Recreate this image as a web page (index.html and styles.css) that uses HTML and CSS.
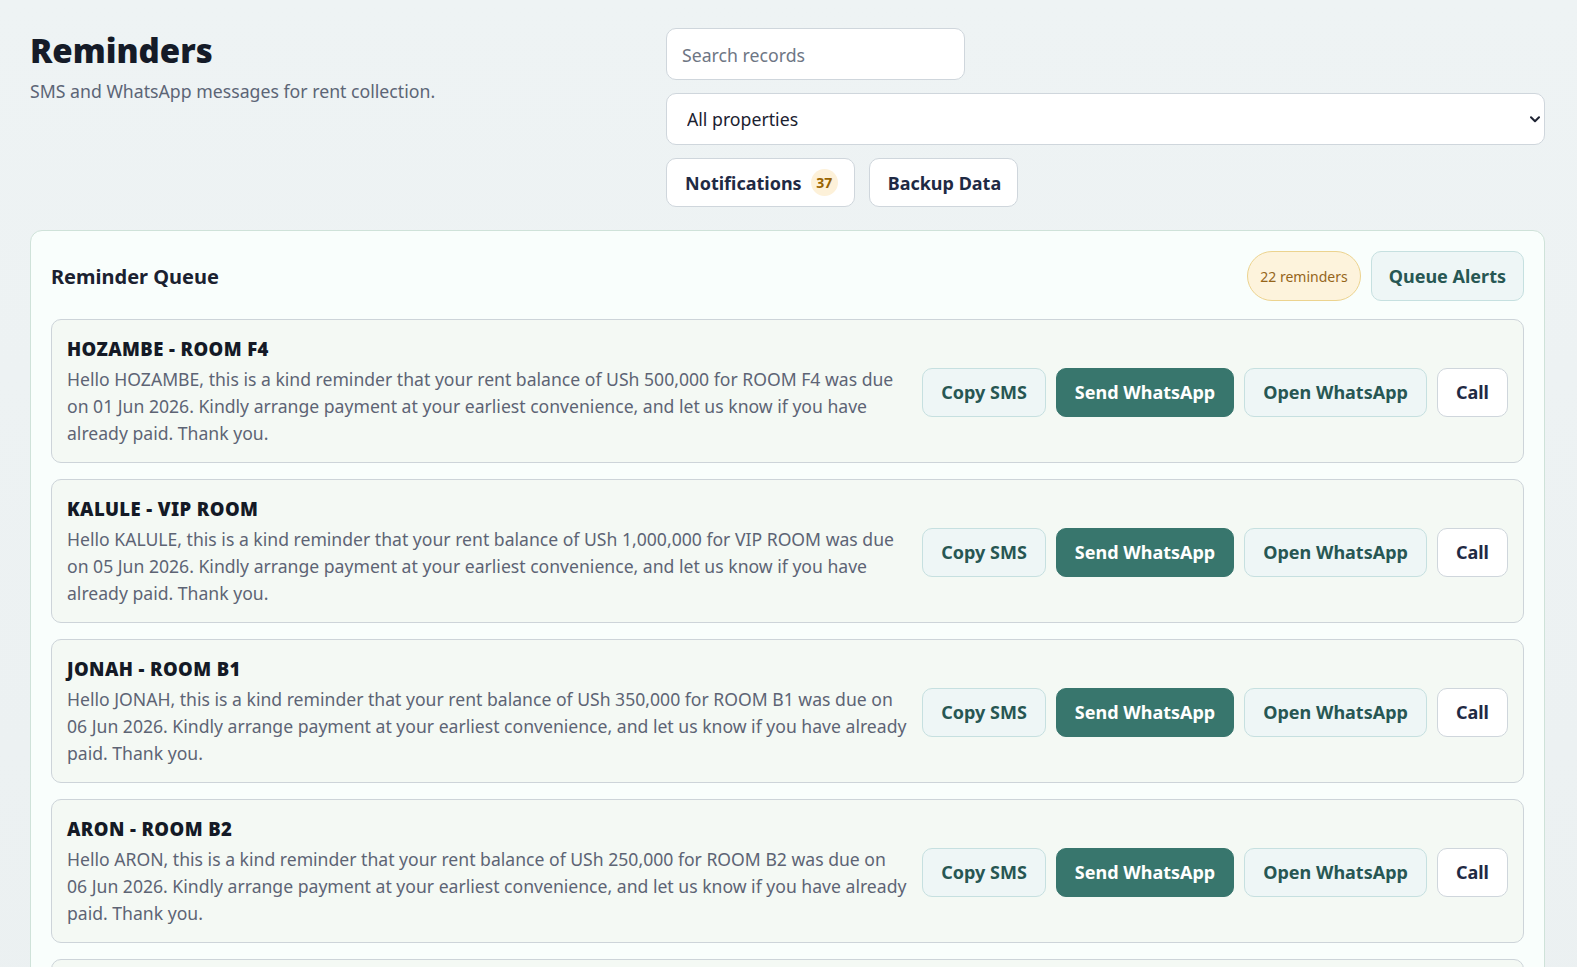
FILE: index.html
```html
<!DOCTYPE html>
<html lang="en">
<head>
<meta charset="UTF-8" />
<meta name="viewport" content="width=device-width, initial-scale=1" />
<title>Reminders</title>
<link rel="stylesheet" href="styles.css">
</head>
<body>

<header class="page-head">
  <div class="page-title">
    <h1>Reminders</h1>
    <p>SMS and WhatsApp messages for rent collection.</p>
  </div>
  <div class="page-tools">
    <input type="text" class="search" placeholder="Search records" />
    <div class="select-wrap">
      <select class="property-select">
        <option>All properties</option>
      </select>
      <svg class="chevron" width="10" height="7" viewBox="0 0 10 7"><path d="M1 1.2 5 5.2l4-4" fill="none" stroke="#1f2433" stroke-width="2" stroke-linecap="round" stroke-linejoin="round"/></svg>
    </div>
    <div class="tool-buttons">
      <button class="btn btn-plain">Notifications <span class="count">37</span></button>
      <button class="btn btn-plain">Backup Data</button>
    </div>
  </div>
</header>

<section class="queue">
  <div class="queue-head">
    <h2>Reminder Queue</h2>
    <div class="queue-actions">
      <span class="pill">22 reminders</span>
      <button class="btn btn-soft">Queue Alerts</button>
    </div>
  </div>

  <div class="reminder">
    <div class="reminder-body">
      <h3>HOZAMBE - ROOM F4</h3>
      <p>Hello HOZAMBE, this is a kind reminder that your rent balance of USh 500,000 for ROOM F4 was due on 01 Jun 2026. Kindly arrange payment at your earliest convenience, and let us know if you have already paid. Thank you.</p>
    </div>
    <div class="reminder-actions">
      <button class="btn btn-soft">Copy SMS</button>
      <button class="btn btn-primary">Send WhatsApp</button>
      <button class="btn btn-soft">Open WhatsApp</button>
      <button class="btn btn-plain">Call</button>
    </div>
  </div>

  <div class="reminder">
    <div class="reminder-body">
      <h3>KALULE - VIP ROOM</h3>
      <p>Hello KALULE, this is a kind reminder that your rent balance of USh 1,000,000 for VIP ROOM was due on 05 Jun 2026. Kindly arrange payment at your earliest convenience, and let us know if you have already paid. Thank you.</p>
    </div>
    <div class="reminder-actions">
      <button class="btn btn-soft">Copy SMS</button>
      <button class="btn btn-primary">Send WhatsApp</button>
      <button class="btn btn-soft">Open WhatsApp</button>
      <button class="btn btn-plain">Call</button>
    </div>
  </div>

  <div class="reminder">
    <div class="reminder-body">
      <h3>JONAH - ROOM B1</h3>
      <p>Hello JONAH, this is a kind reminder that your rent balance of USh 350,000 for ROOM B1 was due on 06 Jun 2026. Kindly arrange payment at your earliest convenience, and let us know if you have already paid. Thank you.</p>
    </div>
    <div class="reminder-actions">
      <button class="btn btn-soft">Copy SMS</button>
      <button class="btn btn-primary">Send WhatsApp</button>
      <button class="btn btn-soft">Open WhatsApp</button>
      <button class="btn btn-plain">Call</button>
    </div>
  </div>

  <div class="reminder">
    <div class="reminder-body">
      <h3>ARON - ROOM B2</h3>
      <p>Hello ARON, this is a kind reminder that your rent balance of USh 250,000 for ROOM B2 was due on 06 Jun 2026. Kindly arrange payment at your earliest convenience, and let us know if you have already paid. Thank you.</p>
    </div>
    <div class="reminder-actions">
      <button class="btn btn-soft">Copy SMS</button>
      <button class="btn btn-primary">Send WhatsApp</button>
      <button class="btn btn-soft">Open WhatsApp</button>
      <button class="btn btn-plain">Call</button>
    </div>
  </div>

  <div class="reminder">
    <div class="reminder-body">
      <h3>MUSA - ROOM A3</h3>
      <p>Hello MUSA, this is a kind reminder that your rent balance of USh 300,000 for ROOM A3 was due on 07 Jun 2026. Kindly arrange payment at your earliest convenience, and let us know if you have already paid. Thank you.</p>
    </div>
    <div class="reminder-actions">
      <button class="btn btn-soft">Copy SMS</button>
      <button class="btn btn-primary">Send WhatsApp</button>
      <button class="btn btn-soft">Open WhatsApp</button>
      <button class="btn btn-plain">Call</button>
    </div>
  </div>
</section>

</body>
</html>
```

FILE: styles.css
```css
body {
  margin: 0;
  padding: 28px 32px 0 30px;
  font-family: "Noto Sans", "Open Sans", sans-serif;
  background: linear-gradient(180deg, #eef3f4 0%, #ebf0f1 100%);
  color: #1b2130;
}
.page-head {
  display: flex;
  justify-content: space-between;
  align-items: flex-start;
}
.page-title h1 {
  margin: 3px 0 0 0;
  font-size: 33px;
  font-weight: 900;
  line-height: 40px;
  color: #151b28;
}
.page-title p {
  margin: 8px 0 0 0;
  font-size: 17.7px;
  color: #5c6576;
}
.page-tools {
  width: 879px;
  display: flex;
  flex-direction: column;
  gap: 13px;
}
.search, .property-select {
  box-sizing: border-box;
  height: 52px;
  border: 1px solid #cfd6dc;
  border-radius: 10px;
  background: #fff;
  font-family: inherit;
  font-size: 17.7px;
  padding: 0 15px;
  color: #1b2130;
}
.search {
  width: 299px;
  padding-top: 2px;
}
.search::placeholder {
  color: #6e7684;
}
.select-wrap {
  position: relative;
}
.property-select {
  width: 100%;
  appearance: none;
  padding-left: 20px;
}
.chevron {
  position: absolute;
  right: 5px;
  top: 23px;
  pointer-events: none;
}
.tool-buttons {
  display: flex;
  gap: 14px;
}
.btn {
  box-sizing: border-box;
  height: 49px;
  padding: 0 18px;
  border-radius: 10px;
  font-family: inherit;
  font-size: 18px;
  font-weight: 700;
  cursor: pointer;
  display: inline-flex;
  align-items: center;
  white-space: nowrap;
}
.tool-buttons .btn {
  padding: 0 16px 0 18px;
}
.btn-plain {
  background: #fff;
  border: 1px solid #cfd6dc;
  color: #1f2a44;
}
.btn-soft {
  background: #eef6f6;
  border: 1px solid #c6e0e0;
  color: #275753;
}
.btn-primary {
  background: #38766d;
  border: 1px solid #38766d;
  color: #fff;
}
.count {
  margin-left: 9px;
  width: 27px;
  height: 27px;
  border-radius: 50%;
  background: #fdf1d9;
  color: #9a6400;
  font-size: 14px;
  display: inline-flex;
  align-items: center;
  justify-content: center;
}
.queue {
  margin-top: 23px;
  background: #f9fefc;
  border: 1px solid #cfe2d9;
  border-radius: 12px;
  padding: 20px 20px 0 20px;
}
.queue-head {
  display: flex;
  justify-content: space-between;
  align-items: center;
  height: 50px;
  margin-bottom: 18px;
}
.queue-head h2 {
  margin: 0;
  font-size: 20px;
  font-weight: 700;
}
.queue-actions {
  display: flex;
  gap: 10px;
  align-items: center;
}
.pill {
  box-sizing: border-box;
  height: 50px;
  padding: 0 12px;
  border-radius: 25px;
  background: #fdf3dc;
  border: 1px solid #ecd38f;
  color: #95651a;
  font-size: 14px;
  display: inline-flex;
  align-items: center;
}
.queue-head .btn {
  height: 50px;
  padding: 0 17px;
}
.reminder {
  display: flex;
  align-items: center;
  gap: 14px;
  background: #f4f9f4;
  border: 1px solid #cdd4d9;
  border-radius: 10px;
  padding: 17px 15px 15px 15px;
  margin-bottom: 16px;
}
.reminder-body {
  flex: 1;
}
.reminder-body h3 {
  margin: 0;
  font-size: 18.5px;
  font-weight: 900;
  line-height: 24px;
  letter-spacing: 0.4px;
  color: #141a26;
}
.reminder-body p {
  margin: 5px 0 0 0;
  font-size: 17.6px;
  line-height: 27px;
  color: #5d6474;
}
.reminder-actions {
  display: flex;
  gap: 10px;
}
```
